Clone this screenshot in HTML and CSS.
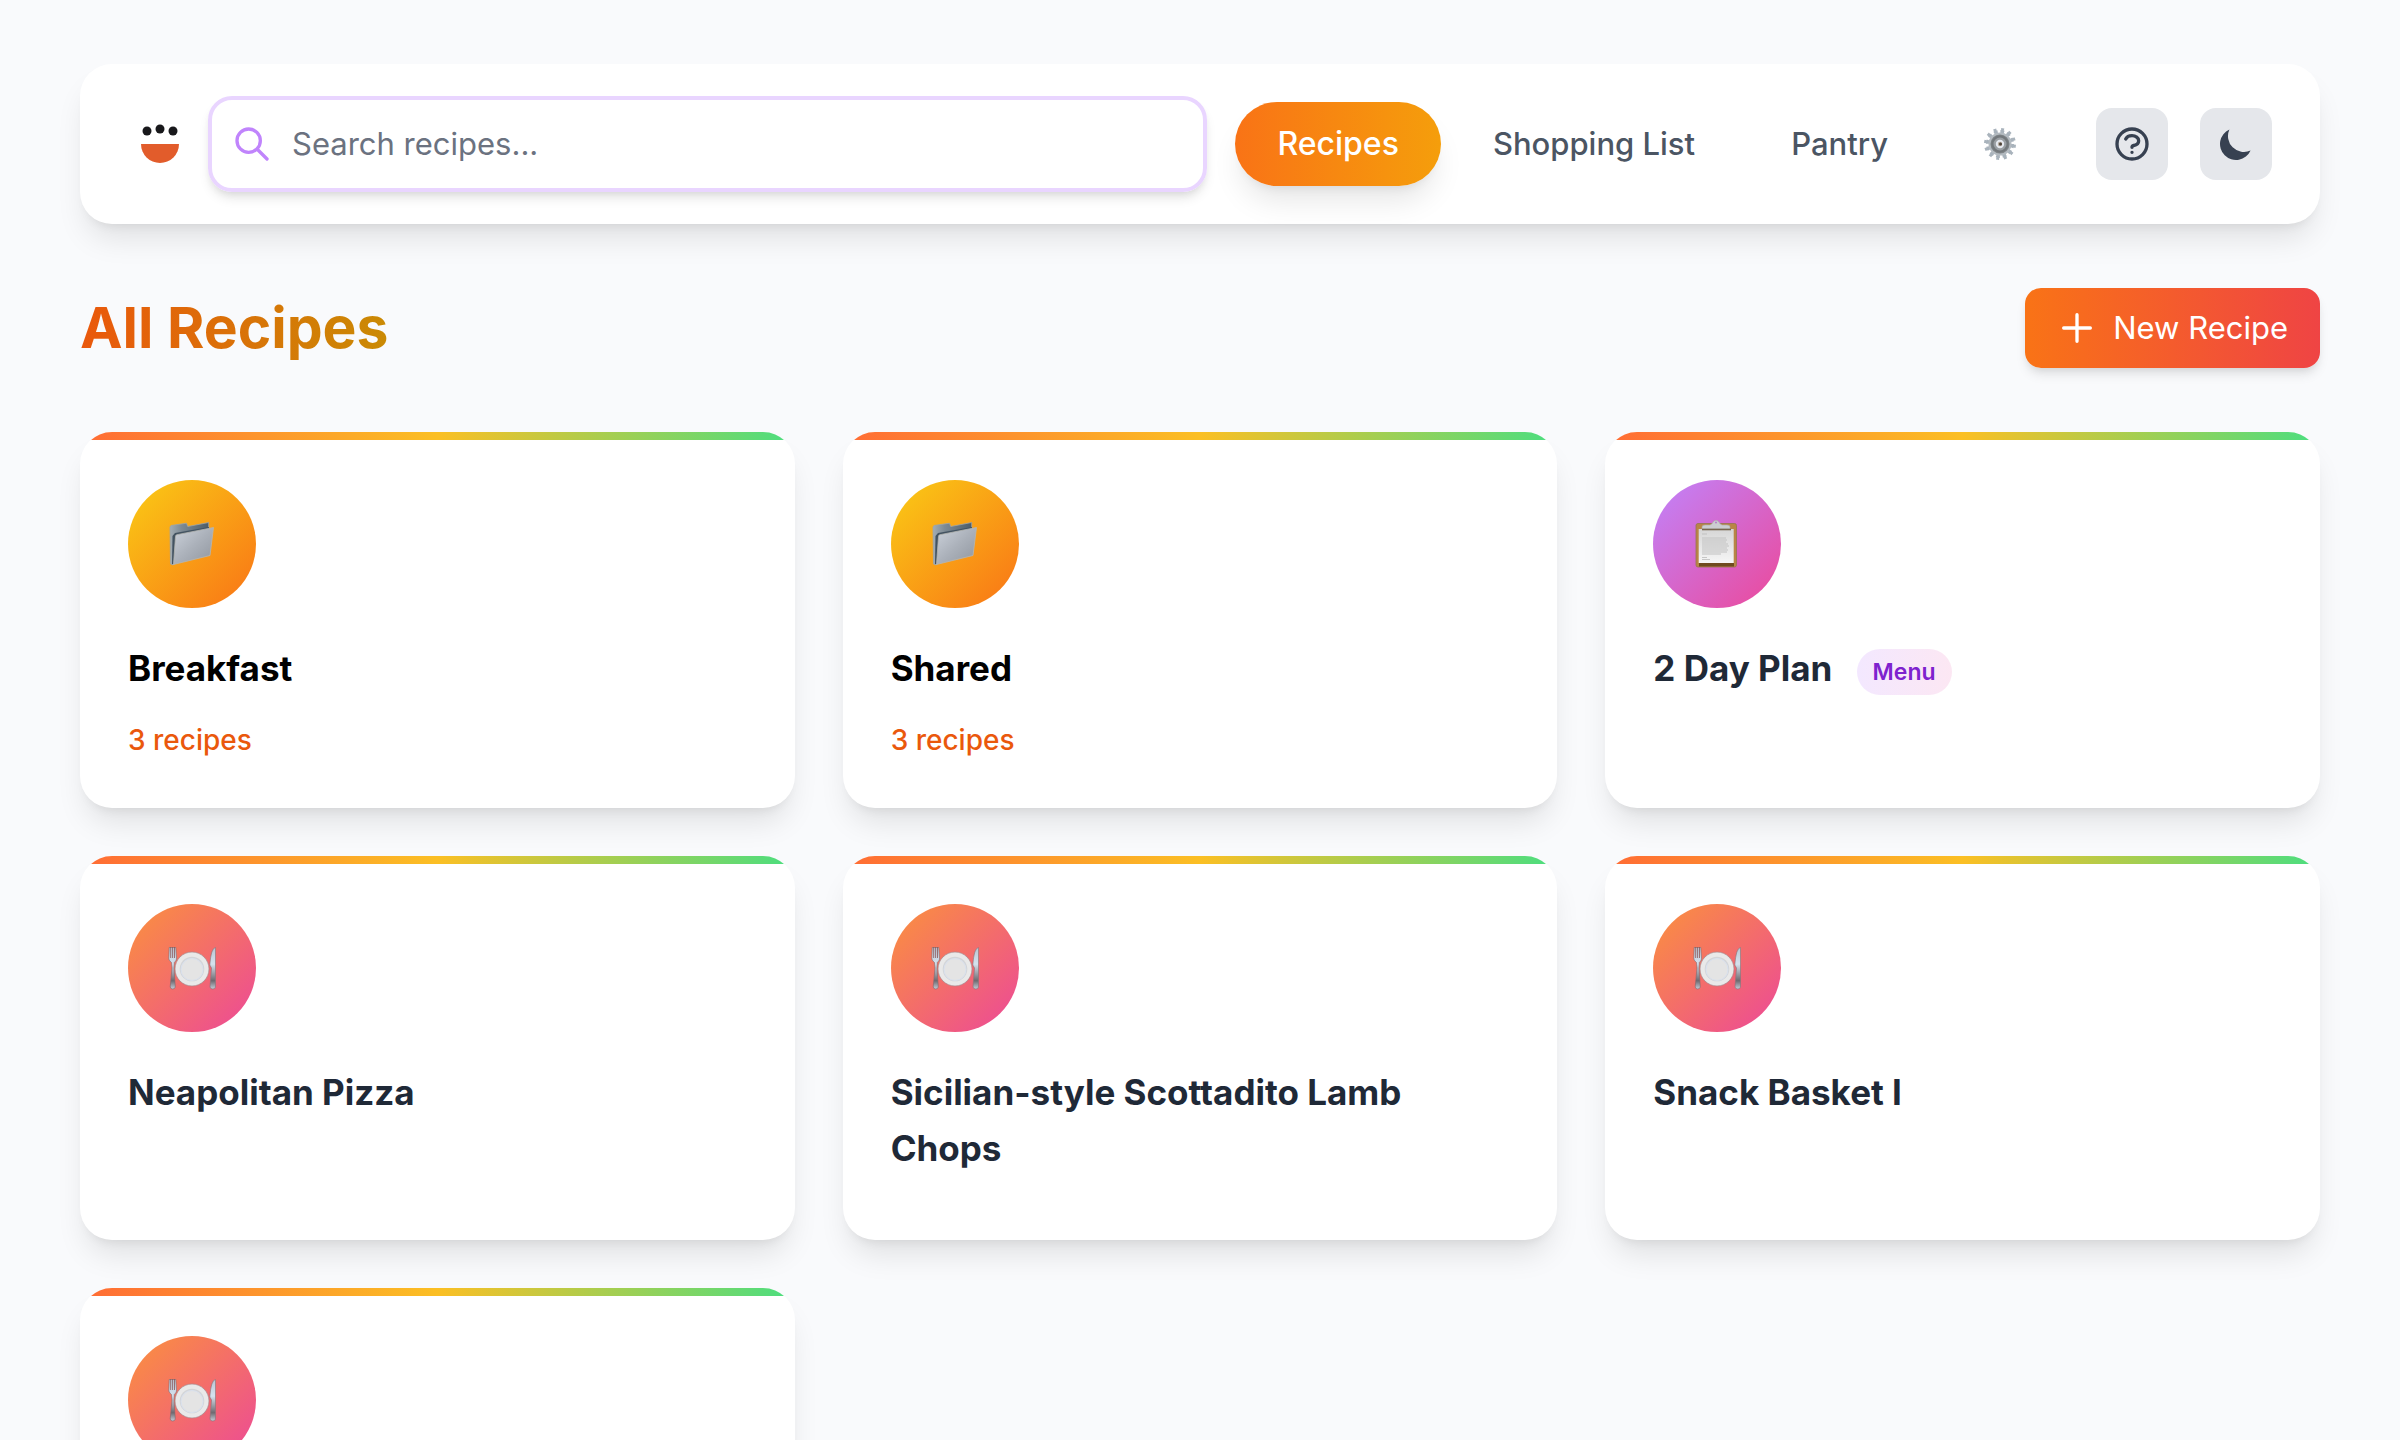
FILE: index.html
```html
<!DOCTYPE html>
<html lang="en">
<head>
  <meta charset="UTF-8" />
  <meta name="viewport" content="width=device-width, initial-scale=1" />
  <title>All Recipes</title>
  <link rel="stylesheet" href="styles.css">
</head>
<body>

  <!-- Shared icons -->
  <svg class="sprite" aria-hidden="true">
    <defs>
      <linearGradient id="steel" x1="0" y1="0" x2="1" y2="1">
        <stop offset="0" stop-color="#ccd2db" />
        <stop offset="0.5" stop-color="#abb1ba" />
        <stop offset="1" stop-color="#8f959e" />
      </linearGradient>
      <linearGradient id="steelDark" x1="0" y1="0" x2="1" y2="0">
        <stop offset="0" stop-color="#a3adb4" />
        <stop offset="0.3" stop-color="#7d8a94" />
        <stop offset="1" stop-color="#4d5d69" />
      </linearGradient>
      <linearGradient id="handle" x1="0" y1="0" x2="0" y2="1">
        <stop offset="0" stop-color="#b9c6d3" />
        <stop offset="0.4" stop-color="#d5e2ee" />
        <stop offset="0.8" stop-color="#6f6a70" />
        <stop offset="1" stop-color="#c3cdd8" />
      </linearGradient>
      <linearGradient id="paper" x1="0" y1="0" x2="0" y2="1">
        <stop offset="0" stop-color="#d6d6d6" />
        <stop offset="1" stop-color="#f6f6f6" />
      </linearGradient>
    </defs>
    <symbol id="icon-folder" viewBox="0 0 48 48">
      <path d="M2 7l1-1.500 15.500-2.300 1.200 3.300 21-4v8L5 45l-2.500-1z" fill="url(#steelDark)" stroke="#9aa5ab" stroke-width="0.800" />
      <path d="M4.500 16l2.500-3 34-6v6L6 44H4z" fill="#435361" />
      <path d="M7.500 16.500q0-1.500 1.500-1.800L45.500 7.500 42 35.500 5.500 44.500z" fill="url(#steel)" stroke="#b5b6b2" stroke-width="0.800" />
    </symbol>
    <symbol id="icon-clipboard" viewBox="0 0 48 48">
      <rect x="3" y="3.500" width="40.500" height="43.500" rx="2" fill="#b98545" stroke="#94764e" stroke-width="0.800" />
      <rect x="6" y="43" width="35" height="3.500" fill="#704a1f" />
      <path d="M5.700 9h35v34h-35z" fill="url(#paper)" />
      <path d="M9 14h5M9 37.500h5M9 39.500h8" stroke="#bbb" stroke-width="0.800" />
      <path d="M9 18h24M9 20h25M9 22h24M9 24h26M9 26h27M9 28h25M9 30h26M9 32h25M9 34h19" stroke="#c2c2c2" stroke-width="1.200" />
      <path d="M9 9V7q0-2 3-2h5q2.500-1 3-3 3-3.500 6 0 .5 2 3 3h5q3 0 3 2v2z" fill="#cbcdd0" stroke="#aaa" stroke-width="0.600" />
      <path d="M9 9.500h29" stroke="#76654e" stroke-width="1.600" />
      <circle cx="23" cy="2.500" r="1.100" fill="#b685c9" />
    </symbol>
    <symbol id="icon-plate" viewBox="0 0 48 48">
      <path d="M1.200 3.500L.8 15q.7 2 2.700 3.500L4 24 2.200 43q.3 2 2.500 2t2.600-2L6 24l.3-5.500Q8 17 8.600 15L7.800 3.500z" fill="url(#handle)" stroke="#80696e" stroke-width="0.600" />
      <path d="M2.700 3v11M4.600 3v11M6.500 3v11" stroke="#8a5558" stroke-width="0.800" />
      <circle cx="24" cy="25" r="17" fill="#e9e9e9" stroke="#a5878b" stroke-width="0.700" />
      <circle cx="24" cy="25" r="12.300" fill="#d3d5d8" />
      <circle cx="24" cy="25.500" r="11" fill="#e4e4e4" stroke="#d9e1ee" stroke-width="1" />
      <path d="M47.500 3.500Q43 4 41.800 21l1.700 3-1.500 19q.3 2 2.800 2t2.700-2z" fill="url(#handle)" stroke="#84757b" stroke-width="0.600" />
    </symbol>
  </svg>

  <div class="container">

    <header class="navbar">
      <a class="logo" href="#" aria-label="Home">
        <svg viewBox="0 0 64 64" aria-hidden="true">
          <circle cx="19" cy="19" r="4.500" fill="#18181b" />
          <circle cx="32" cy="17" r="4.500" fill="#18181b" />
          <circle cx="45" cy="19" r="4.500" fill="#18181b" />
          <path d="M13 32h38a19 19 0 0 1-38 0z" fill="#e25c2b" />
        </svg>
      </a>

      <div class="search">
        <svg class="search-icon" viewBox="0 0 24 24" aria-hidden="true">
          <path d="M21 21l-6-6m2-5a7 7 0 11-14 0 7 7 0 0114 0z" />
        </svg>
        <input type="text" placeholder="Search recipes..." aria-label="Search recipes">
      </div>

      <nav class="nav-links">
        <a class="nav-link active" href="#">Recipes</a>
        <a class="nav-link" href="#">Shopping List</a>
        <a class="nav-link" href="#">Pantry</a>
        <a class="nav-link" href="#" aria-label="Settings">
          <svg class="gear" viewBox="0 0 40 40" aria-hidden="true">
            <g fill="none" stroke="#a9b3bc">
              <circle cx="16" cy="20" r="12.500" stroke-width="3" stroke-dasharray="3.800 2.745" />
              <circle cx="16" cy="20" r="14.500" stroke-width="3" stroke-dasharray="2.900 4.692" stroke-dashoffset="-0.700" />
            </g>
            <circle cx="16" cy="20" r="10.500" fill="#7e8386" stroke="#b3bac0" stroke-width="2" />
            <circle cx="16" cy="20" r="7.500" fill="#9a9fa3" stroke="#73787c" stroke-width="2" />
            <circle cx="16" cy="20" r="3.200" fill="#b5a99b" stroke="#e6e9f0" stroke-width="2" />
            <circle cx="16.500" cy="20" r="1.500" fill="#4a4038" />
          </svg>
        </a>
      </nav>

      <div class="nav-actions">
        <button class="icon-button" type="button" aria-label="Help">
          <svg viewBox="0 0 24 24" aria-hidden="true">
            <path d="M8.228 9c.549-1.165 2.030-2 3.772-2 2.210 0 4 1.343 4 3 0 1.400-1.278 2.575-3.006 2.907-.542.104-.994.540-.994 1.093m0 3h.01M21 12a9 9 0 11-18 0 9 9 0 0118 0z" />
          </svg>
        </button>
        <button class="icon-button" type="button" aria-label="Dark mode">
          <svg class="moon" viewBox="0 0 20 20" aria-hidden="true">
            <path d="M17.293 13.293A8 8 0 016.707 2.707a8.001 8.001 0 1010.586 10.586z" />
          </svg>
        </button>
      </div>
    </header>

    <div class="page-header">
      <h1>All Recipes</h1>
      <button class="new-recipe" type="button">
        <svg viewBox="0 0 24 24" aria-hidden="true">
          <path d="M12 4v16m8-8H4" />
        </svg>
        New Recipe
      </button>
    </div>

    <main class="recipe-grid">
      <a class="card folder" href="#">
        <div class="card-icon"><svg><use href="#icon-folder" /></svg></div>
        <h2>Breakfast</h2>
        <p class="count">3 recipes</p>
      </a>
      <a class="card folder" href="#">
        <div class="card-icon"><svg><use href="#icon-folder" /></svg></div>
        <h2>Shared</h2>
        <p class="count">3 recipes</p>
      </a>
      <a class="card menu" href="#">
        <div class="card-icon"><svg><use href="#icon-clipboard" /></svg></div>
        <h2>2 Day Plan <span class="badge">Menu</span></h2>
      </a>
      <a class="card" href="#">
        <div class="card-icon"><svg><use href="#icon-plate" /></svg></div>
        <h2>Neapolitan Pizza</h2>
      </a>
      <a class="card" href="#">
        <div class="card-icon"><svg><use href="#icon-plate" /></svg></div>
        <h2>Sicilian-style Scottadito Lamb Chops</h2>
      </a>
      <a class="card" href="#">
        <div class="card-icon"><svg><use href="#icon-plate" /></svg></div>
        <h2>Snack Basket I</h2>
      </a>
      <a class="card" href="#" aria-label="Recipe">
        <div class="card-icon"><svg><use href="#icon-plate" /></svg></div>
      </a>
    </main>

  </div>

</body>
</html>
```

FILE: styles.css
```css
* {
  box-sizing: border-box;
}

body {
  margin: 0;
  font-family: Inter, "Liberation Sans", sans-serif;
  font-size: 31px;
  line-height: 48px;
  background-color: #f9fafc;
  color: #1f2937;
}

a {
  color: inherit;
  text-decoration: none;
}

button,
input {
  font: inherit;
}

svg {
  display: block;
}

.sprite {
  position: absolute;
  width: 0;
  height: 0;
}

.container {
  padding: 64px 80px;
}

/* Top bar */
.navbar {
  display: flex;
  align-items: center;
  padding: 32px 48px;
  background: white;
  border-radius: 32px;
  box-shadow: 0 20px 30px -6px rgba(0, 0, 0, 0.1), 0 8px 12px -8px rgba(0, 0, 0, 0.1);
}

.logo {
  width: 64px;
  margin-right: 16px;
}

.search {
  flex: 1;
  display: flex;
  align-items: center;
  gap: 20px;
  height: 96px;
  padding: 0 20px;
  border: 4px solid #e9d5ff;
  border-radius: 24px;
  box-shadow: 0 8px 12px -2px rgba(0, 0, 0, 0.1), 0 4px 8px -4px rgba(0, 0, 0, 0.1);
}

.search-icon {
  width: 40px;
  fill: none;
  stroke: #c084fc;
  stroke-width: 2;
  stroke-linecap: round;
  stroke-linejoin: round;
}

.search input {
  flex: 1;
  min-width: 0;
  padding: 0;
  border: 0;
  outline: 0;
  background: none;
  color: #1f2937;
}

.search input::placeholder {
  color: #6b7280;
  opacity: 1;
}

.nav-links {
  display: flex;
  align-items: center;
  gap: 16px;
  margin: 0 32px;
}

.nav-link {
  padding: 16px 40px;
  border-radius: 42px;
  font-weight: 500;
  color: #4b5563;
}

.nav-link.active {
  padding: 18px 42px;
  margin: 0 -4px;
  background: linear-gradient(to right, #f97316, #f59e0b);
  color: white;
  font-size: 32px;
  box-shadow: 0 20px 30px -6px rgba(0, 0, 0, 0.1), 0 8px 12px -8px rgba(0, 0, 0, 0.1);
}

.gear {
  width: 40px;
}

.nav-actions {
  display: flex;
  gap: 32px;
}

.icon-button {
  width: 72px;
  height: 72px;
  padding: 16px;
  border: 0;
  border-radius: 16px;
  background: #e5e7eb;
}

.icon-button svg {
  width: 40px;
  fill: none;
  stroke: #374151;
  stroke-width: 2;
  stroke-linecap: round;
  stroke-linejoin: round;
}

.icon-button .moon {
  fill: #374151;
  stroke: none;
}

/* Title row */
.page-header {
  display: flex;
  align-items: center;
  justify-content: space-between;
  margin: 64px 0;
}

h1 {
  margin: 0;
  font-size: 57px;
  line-height: 72px;
  font-weight: 700;
  background: linear-gradient(to right, #ea580c, #ca8a04);
  -webkit-background-clip: text;
  background-clip: text;
  color: transparent;
}

.new-recipe {
  display: flex;
  align-items: center;
  gap: 16px;
  padding: 16px 32px;
  border: 0;
  border-radius: 16px;
  background: linear-gradient(to right, #f97316, #ef4444);
  color: white;
  box-shadow: 0 8px 12px -2px rgba(0, 0, 0, 0.1), 0 4px 8px -4px rgba(0, 0, 0, 0.1);
}

.new-recipe svg {
  width: 40px;
  fill: none;
  stroke: currentColor;
  stroke-width: 2;
  stroke-linecap: round;
}

/* Cards */
.recipe-grid {
  display: grid;
  grid-template-columns: repeat(3, 1fr);
  gap: 48px;
}

.card {
  position: relative;
  overflow: hidden;
  padding: 48px;
  background: white;
  border-radius: 32px;
  box-shadow: 0 20px 30px -6px rgba(0, 0, 0, 0.1), 0 8px 12px -8px rgba(0, 0, 0, 0.1);
}

.card::before {
  content: "";
  position: absolute;
  top: 0;
  left: 0;
  right: 0;
  height: 8px;
  background: linear-gradient(to right, #ff6b35, #fbbf24, #4ade80);
}

.card-icon {
  display: flex;
  align-items: center;
  justify-content: center;
  width: 128px;
  height: 128px;
  margin-bottom: 32px;
  border-radius: 50%;
  background: linear-gradient(to bottom right, #fb923c, #ec4899);
}

.card-icon svg {
  width: 48px;
  height: 48px;
}

.folder .card-icon {
  background: linear-gradient(to bottom right, #facc15, #f97316);
}

.menu .card-icon {
  background: linear-gradient(to bottom right, #c084fc, #ec4899);
}

.card h2 {
  margin: 0 0 16px;
  font-size: 35px;
  line-height: 56px;
  font-weight: 700;
}

.folder h2 {
  color: black;
}

.count {
  margin: 24px 0 0;
  font-size: 28px;
  line-height: 40px;
  font-weight: 500;
  color: #ea580c;
}

.badge {
  display: inline-block;
  margin-left: 16px;
  padding: 7px 16px;
  border-radius: 23px;
  background: linear-gradient(to right, #f3e8ff, #fce7f3);
  color: #7e22ce;
  font-size: 23px;
  line-height: 32px;
  font-weight: 600;
  vertical-align: 1px;
}
```
